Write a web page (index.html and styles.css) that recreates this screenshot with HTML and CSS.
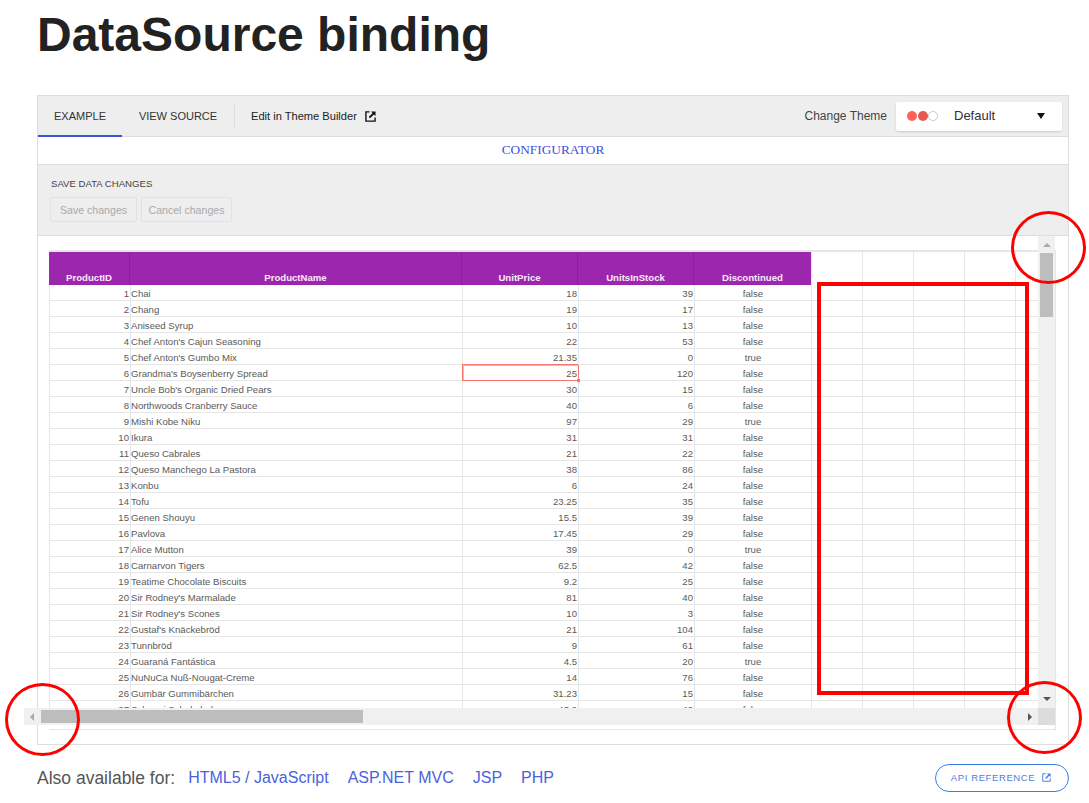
FILE: index.html
```html
<!DOCTYPE html>
<html lang="en">
<head>
<meta charset="utf-8">
<title>DataSource binding</title>
<link rel="stylesheet" href="styles.css">
</head>
<body>
<main class="page">
  <h1 class="title">DataSource binding</h1>
  <section class="demo">
    <div class="toolbar">
      <div class="tabs">
        <a class="tab tab-active">EXAMPLE</a>
        <a class="tab">VIEW SOURCE</a>
      </div>
      <a class="builder">Edit in Theme Builder
        <svg class="ext-icon" viewBox="0 0 12 12" width="11" height="11"><path d="M5 1H1v10h10V7" fill="none" stroke="currentColor" stroke-width="1.5"/><path d="M6.5 0.5H11.5V5.5L9.7 3.7 5.5 7.9 4.1 6.5 8.3 2.3Z" fill="currentColor"/></svg>
      </a>
      <div class="theme">
        <span class="theme-label">Change Theme</span>
        <div class="theme-select">
          <span class="swatches"><i class="dot dot-a"></i><i class="dot dot-b"></i><i class="dot dot-c"></i></span>
          <span class="theme-name">Default</span>
          <span class="caret"></span>
        </div>
      </div>
    </div>
    <div class="configurator">CONFIGURATOR</div>
    <div class="options">
      <div class="options-title">SAVE DATA CHANGES</div>
      <div class="options-buttons">
        <button class="btn" disabled>Save changes</button>
        <button class="btn" disabled>Cancel changes</button>
      </div>
    </div>
    <div class="sheet">
      <div class="viewport">
        <table class="grid">
          <colgroup><col class="c-id"><col class="c-name"><col class="c-num"><col class="c-num"><col class="c-num2"><col class="c-e"><col class="c-e"><col class="c-e"><col class="c-e"><col class="c-e"></colgroup>
          <thead><tr><th>ProductID</th><th>ProductName</th><th>UnitPrice</th><th>UnitsInStock</th><th>Discontinued</th><td class="blank"></td><td class="blank"></td><td class="blank"></td><td class="blank"></td><td class="blank"></td></tr></thead>
          <tbody>
            <tr><td class="r">1</td><td>Chai</td><td class="r">18</td><td class="r">39</td><td class="m">false</td><td></td><td></td><td></td><td></td><td></td></tr>
            <tr><td class="r">2</td><td>Chang</td><td class="r">19</td><td class="r">17</td><td class="m">false</td><td></td><td></td><td></td><td></td><td></td></tr>
            <tr><td class="r">3</td><td>Aniseed Syrup</td><td class="r">10</td><td class="r">13</td><td class="m">false</td><td></td><td></td><td></td><td></td><td></td></tr>
            <tr><td class="r">4</td><td>Chef Anton's Cajun Seasoning</td><td class="r">22</td><td class="r">53</td><td class="m">false</td><td></td><td></td><td></td><td></td><td></td></tr>
            <tr><td class="r">5</td><td>Chef Anton's Gumbo Mix</td><td class="r">21.35</td><td class="r">0</td><td class="m">true</td><td></td><td></td><td></td><td></td><td></td></tr>
            <tr><td class="r">6</td><td>Grandma's Boysenberry Spread</td><td class="r selected">25<i class="handle"></i></td><td class="r">120</td><td class="m">false</td><td></td><td></td><td></td><td></td><td></td></tr>
            <tr><td class="r">7</td><td>Uncle Bob's Organic Dried Pears</td><td class="r">30</td><td class="r">15</td><td class="m">false</td><td></td><td></td><td></td><td></td><td></td></tr>
            <tr><td class="r">8</td><td>Northwoods Cranberry Sauce</td><td class="r">40</td><td class="r">6</td><td class="m">false</td><td></td><td></td><td></td><td></td><td></td></tr>
            <tr><td class="r">9</td><td>Mishi Kobe Niku</td><td class="r">97</td><td class="r">29</td><td class="m">true</td><td></td><td></td><td></td><td></td><td></td></tr>
            <tr><td class="r">10</td><td>Ikura</td><td class="r">31</td><td class="r">31</td><td class="m">false</td><td></td><td></td><td></td><td></td><td></td></tr>
            <tr><td class="r">11</td><td>Queso Cabrales</td><td class="r">21</td><td class="r">22</td><td class="m">false</td><td></td><td></td><td></td><td></td><td></td></tr>
            <tr><td class="r">12</td><td>Queso Manchego La Pastora</td><td class="r">38</td><td class="r">86</td><td class="m">false</td><td></td><td></td><td></td><td></td><td></td></tr>
            <tr><td class="r">13</td><td>Konbu</td><td class="r">6</td><td class="r">24</td><td class="m">false</td><td></td><td></td><td></td><td></td><td></td></tr>
            <tr><td class="r">14</td><td>Tofu</td><td class="r">23.25</td><td class="r">35</td><td class="m">false</td><td></td><td></td><td></td><td></td><td></td></tr>
            <tr><td class="r">15</td><td>Genen Shouyu</td><td class="r">15.5</td><td class="r">39</td><td class="m">false</td><td></td><td></td><td></td><td></td><td></td></tr>
            <tr><td class="r">16</td><td>Pavlova</td><td class="r">17.45</td><td class="r">29</td><td class="m">false</td><td></td><td></td><td></td><td></td><td></td></tr>
            <tr><td class="r">17</td><td>Alice Mutton</td><td class="r">39</td><td class="r">0</td><td class="m">true</td><td></td><td></td><td></td><td></td><td></td></tr>
            <tr><td class="r">18</td><td>Carnarvon Tigers</td><td class="r">62.5</td><td class="r">42</td><td class="m">false</td><td></td><td></td><td></td><td></td><td></td></tr>
            <tr><td class="r">19</td><td>Teatime Chocolate Biscuits</td><td class="r">9.2</td><td class="r">25</td><td class="m">false</td><td></td><td></td><td></td><td></td><td></td></tr>
            <tr><td class="r">20</td><td>Sir Rodney's Marmalade</td><td class="r">81</td><td class="r">40</td><td class="m">false</td><td></td><td></td><td></td><td></td><td></td></tr>
            <tr><td class="r">21</td><td>Sir Rodney's Scones</td><td class="r">10</td><td class="r">3</td><td class="m">false</td><td></td><td></td><td></td><td></td><td></td></tr>
            <tr><td class="r">22</td><td>Gustaf's Knäckebröd</td><td class="r">21</td><td class="r">104</td><td class="m">false</td><td></td><td></td><td></td><td></td><td></td></tr>
            <tr><td class="r">23</td><td>Tunnbröd</td><td class="r">9</td><td class="r">61</td><td class="m">false</td><td></td><td></td><td></td><td></td><td></td></tr>
            <tr><td class="r">24</td><td>Guaraná Fantástica</td><td class="r">4.5</td><td class="r">20</td><td class="m">true</td><td></td><td></td><td></td><td></td><td></td></tr>
            <tr><td class="r">25</td><td>NuNuCa Nuß-Nougat-Creme</td><td class="r">14</td><td class="r">76</td><td class="m">false</td><td></td><td></td><td></td><td></td><td></td></tr>
            <tr><td class="r">26</td><td>Gumbär Gummibärchen</td><td class="r">31.23</td><td class="r">15</td><td class="m">false</td><td></td><td></td><td></td><td></td><td></td></tr>
            <tr><td class="r">27</td><td>Schoggi Schokolade</td><td class="r">43.9</td><td class="r">49</td><td class="m">false</td><td></td><td></td><td></td><td></td><td></td></tr>
          </tbody>
        </table>
      </div>
      <div class="vbar"><i class="arrow arrow-up"></i><i class="vthumb"></i><i class="arrow arrow-down"></i></div>
      <div class="hbar"><i class="arrow arrow-left"></i><i class="hthumb"></i><i class="arrow arrow-right"></i></div>
      <div class="corner"></div>
    </div>
    <div class="mark-rect"></div>
    <div class="mark-circle mark-tr"></div>
    <div class="mark-circle mark-bl"></div>
    <div class="mark-circle mark-br"></div>
  </section>
  <footer class="footer">
    <span class="also">Also available for:</span>
    <a class="flink">HTML5 / JavaScript</a>
    <a class="flink">ASP.NET MVC</a>
    <a class="flink">JSP</a>
    <a class="flink">PHP</a>
    <a class="api">API REFERENCE
      <svg class="api-icon" viewBox="0 0 12 12" width="9" height="9"><path d="M5 1H1v10h10V7" fill="none" stroke="currentColor" stroke-width="1.3"/><path d="M6.5 0.5H11.5V5.5L9.7 3.7 5.5 7.9 4.1 6.5 8.3 2.3Z" fill="currentColor"/></svg>
    </a>
  </footer>
</main>
</body>
</html>
```
FILE: styles.css
```css
* { box-sizing: border-box; }
html, body { margin: 0; height: 100%; overflow: hidden; background: #fff; }
body { font-family: "Liberation Sans", Arial, sans-serif; color: #333; }
.page { padding: 0 20px 0 37px; width: 1089px; }
.title { margin: 0; height: 95px; padding-top: 7px; font: 700 48px/56px "Liberation Sans", Arial, sans-serif; color: #222; }

.demo { position: relative; width: 1032px; height: 650px; border: 1px solid #ddd; }
.toolbar { display: flex; align-items: center; height: 41px; background: #eee; border-bottom: 1px solid #ddd; }
.tabs { display: flex; height: 40px; }
.tab { display: flex; align-items: center; justify-content: center; height: 41px; font-size: 11px; color: #333; border-bottom: 2px solid transparent; }
.tab:first-child { width: 84px; border-bottom-color: #3f51d9; }
.tab:nth-child(2) { width: 112px; }
.builder { display: flex; align-items: center; gap: 8px; height: 24px; padding-left: 16px; border-left: 1px solid #ddd; font-size: 11.1px; color: #222; }
.ext-icon { color: #111; }
.theme { display: flex; align-items: center; margin-left: auto; padding-right: 6px; }
.theme-label { font-size: 12px; color: #444; margin-right: 9px; }
.theme-select { display: flex; align-items: center; width: 166px; height: 29px; background: #fff; border-radius: 2px; box-shadow: 0 1px 2px rgba(0,0,0,.15); padding-left: 11px; }
.swatches { display: flex; width: 47px; }
.dot { width: 10px; height: 10px; border-radius: 50%; margin-right: 1px; }
.dot-a { background: #ff6358; }
.dot-b { background: #e8584f; }
.dot-c { background: #fff; border: 1px solid #ccc; margin-left: -1px; }
.theme-name { font-size: 13px; color: #333; margin-bottom: 1px; }
.caret { margin-left: auto; margin-right: 17px; border-left: 4px solid transparent; border-right: 4px solid transparent; border-top: 6px solid #111; }

.configurator { height: 28px; text-align: center; font: 13.33px/25px "Liberation Serif", serif; color: #3f51d9; border-bottom: 1px solid #ddd; }
.options { height: 71px; padding: 13px 13px 0 12px; background: #eee; border-bottom: 1px solid #ddd; }
.options-title { font-size: 9.6px; line-height: 12px; color: #444; padding-left: 1px; }
.options-buttons { display: flex; gap: 4px; margin-top: 7px; }
.btn { height: 25px; padding: 0; font: 10.6px "Liberation Sans", Arial, sans-serif; color: #aaa; background: #eee; border: 1px solid #e2e2e2; border-radius: 2px; }
.btn:first-child { width: 87px; }
.btn:last-child { width: 91px; }

.sheet { position: relative; margin: 14px 13px 0 11px; width: 1007px; height: 480px; border: 1px solid #e6e6e6; border-top: 2px solid #e6e6e6; border-left: 0; }
.viewport { height: 456px; width: 989px; overflow: hidden; }
.grid { table-layout: fixed; border-collapse: separate; border-spacing: 0; width: 1017px; font-size: 9.6px; color: #5a5a5a; }
.c-id { width: 81px; } .c-name { width: 332px; } .c-num { width: 116px; } .c-num2 { width: 117px; } .c-e { width: 51px; }
.grid th { height: 33px; padding: 0; vertical-align: bottom; background: #9c27ae; border-right: 1px solid #8a2099; color: #fbeafd; font: 700 9.6px/14px "Liberation Sans", Arial, sans-serif; }
.grid th:nth-child(5) { border-right: 0; }
.grid td { height: 16px; padding: 2px 0 0; line-height: 13px; border-left: 1px solid #e6e6e6; border-bottom: 1px solid #e6e6e6; white-space: nowrap; }
.grid thead td { height: 33px; border-bottom: 0; }
.grid td.r { text-align: right; padding-right: 1px; }
.m { text-align: center; }
.grid td.selected { position: relative; z-index: 1; border-left-color: #f8756b; border-bottom-color: #f8756b; box-shadow: 1px 0 0 #f8756b, 0 -1px 0 #f8756b, inset 1px 1px 0 #fbb1aa; }
.handle { position: absolute; right: -2px; bottom: -2px; width: 3px; height: 3px; background: #f8756b; }

.vbar { position: absolute; top: -16px; left: 989px; width: 17px; height: 472px; background: #f0f0f0; }
.vthumb { position: absolute; left: 2px; top: 17px; width: 13px; height: 64px; background: #bdbdbd; }
.hbar { position: absolute; top: 456px; left: -25px; width: 1014px; height: 17px; background: #f0f0f0; }
.hthumb { position: absolute; left: 17px; top: 2px; width: 322px; height: 13px; background: #bdbdbd; }
.corner { position: absolute; top: 456px; left: 989px; width: 17px; height: 17px; background: #dcdcdc; }
.arrow { position: absolute; width: 0; height: 0; border: 4px solid transparent; }
.arrow-up { left: 5px; top: 7px; border-top: 0; border-bottom: 4px solid #aaa; }
.arrow-down { left: 5px; bottom: 7px; border-bottom: 0; border-top: 4px solid #555; }
.arrow-left { left: 6px; top: 5px; border-left: 0; border-right: 4px solid #aaa; }
.arrow-right { right: 6px; top: 5px; border-right: 0; border-left: 4px solid #555; }

.mark-rect { position: absolute; left: 779px; top: 186px; width: 212px; height: 413px; border: 4px solid #f00; }
.mark-circle { position: absolute; width: 75px; height: 73px; border: 3.5px solid #f00; border-radius: 50%; }
.mark-tr { left: 973px; top: 115px; }
.mark-bl { left: -33px; top: 587px; }
.mark-br { left: 969px; top: 585px; }

.footer { display: flex; align-items: center; margin-top: 19px; width: 1032px; height: 28px; }
.also { font-size: 17.5px; color: #555; margin-right: 13px; }
.flink { font-size: 16px; color: #4a62dd; margin-right: 19px; }
.api { display: flex; align-items: center; justify-content: center; gap: 7px; margin-left: auto; width: 134px; height: 28px; border: 1px solid #3b7de8; border-radius: 14px; font-size: 9.5px; letter-spacing: .6px; color: #4a7fe0; padding: 0 2px 1px 0; }
.api-icon { color: #4a7fe0; }
```
